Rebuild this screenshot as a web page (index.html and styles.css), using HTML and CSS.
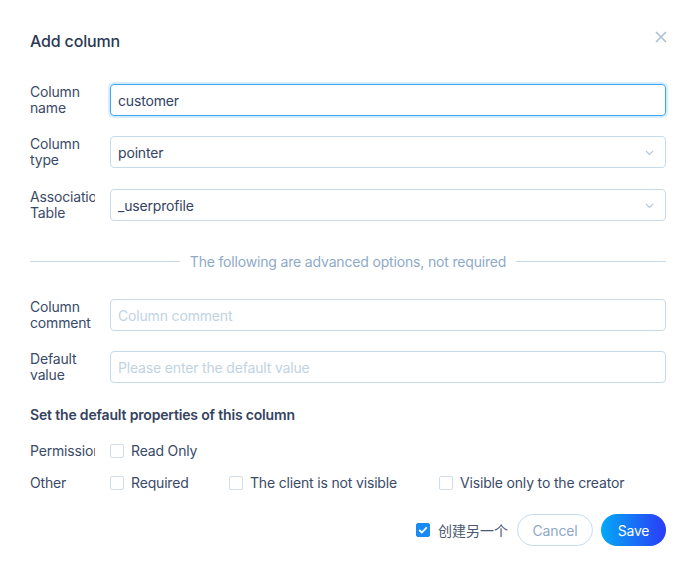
FILE: index.html
```html
<!DOCTYPE html>
<html>
<head>
<meta charset="utf-8">
<link rel="stylesheet" href="styles.css">
</head>
<body>
<div class="dialog">
  <div class="header">
    <h1 class="title">Add column</h1>
    <button class="close" aria-label="Close">
      <svg width="12" height="12" viewBox="0 0 12 12"><path d="M1 1L11 11M11 1L1 11" stroke="#a9c0d6" stroke-width="1.6" fill="none"/></svg>
    </button>
  </div>

  <div class="row">
    <label class="label"><span>Column name</span></label>
    <div class="input focused">customer</div>
  </div>
  <div class="row">
    <label class="label"><span>Column type</span></label>
    <div class="input select">pointer
      <svg class="chev" width="9" height="6" viewBox="0 0 9 6"><path d="M1 1L4.5 4.5L8 1" stroke="#b3c7da" stroke-width="1.1" fill="none"/></svg>
    </div>
  </div>
  <div class="row row-3">
    <label class="label"><span>Association Table</span></label>
    <div class="input select">_userprofile
      <svg class="chev" width="9" height="6" viewBox="0 0 9 6"><path d="M1 1L4.5 4.5L8 1" stroke="#b3c7da" stroke-width="1.1" fill="none"/></svg>
    </div>
  </div>

  <div class="divider"><span>The following are advanced options, not required</span></div>

  <div class="row">
    <label class="label"><span>Column comment</span></label>
    <div class="input placeholder">Column comment</div>
  </div>
  <div class="row last">
    <label class="label"><span>Default value</span></label>
    <div class="input placeholder">Please enter the default value</div>
  </div>

  <h2 class="subhead">Set the default properties of this column</h2>

  <div class="crow">
    <label class="label"><span>Permissions</span></label>
    <div class="checks">
      <span class="check"><i class="box"></i>Read Only</span>
    </div>
  </div>
  <div class="crow">
    <label class="label"><span>Other</span></label>
    <div class="checks">
      <span class="check w1"><i class="box"></i>Required</span>
      <span class="check w2"><i class="box"></i>The client is not visible</span>
      <span class="check"><i class="box"></i>Visible only to the creator</span>
    </div>
  </div>

  <div class="footer">
    <span class="check again"><i class="box on"><svg width="10" height="8" viewBox="0 0 10 8"><path d="M1.2 4L3.8 6.5L8.8 1.3" stroke="#fff" stroke-width="1.8" fill="none"/></svg></i>创建另一个</span>
    <button class="btn cancel">Cancel</button>
    <button class="btn save">Save</button>
  </div>
</div>
</body>
</html>
```

FILE: styles.css
```css
* { box-sizing: border-box; }
html, body { margin: 0; padding: 0; background: #fff; }
body {
  font-family: Inter, "Noto Sans CJK SC", sans-serif;
  font-size: 14px;
  letter-spacing: -0.17px;
  color: #34435f;
}
.dialog {
  width: 697px;
  height: 575px;
  padding: 29px 31px 0 30px;
}
.header {
  display: flex;
  justify-content: space-between;
  align-items: center;
  height: 24px;
  margin-bottom: 31px;
}
.title {
  margin: 0;
  font-size: 16px;
  font-weight: 500;
  line-height: 24px;
  color: #2b3955;
}
.close {
  border: 0;
  background: none;
  padding: 0;
  margin: -8px -1px 0 0;
  width: 12px;
  height: 12px;
  display: flex;
}
.row {
  display: flex;
  align-items: center;
  height: 32px;
  margin-bottom: 20px;
}
.row-3 { margin-top: 21px; margin-bottom: 0; }
.row.last { margin-bottom: 0; }
.label {
  width: 80px;
  flex: none;
  font-size: 14px;
  line-height: 16px;
  color: #3a4a68;
}
.label span {
  display: block;
  width: 65px;
  overflow: hidden;
}
.input {
  flex: 1;
  height: 32px;
  border: 1px solid #c8dae9;
  border-radius: 4px;
  padding: 0 7px;
  display: flex;
  align-items: center;
  font-size: 14px;
  color: #34435f;
  position: relative;
}
.input.focused {
  border-color: #3ea7f2;
  box-shadow: 0 0 0 2px rgba(62, 167, 242, 0.22);
}
.input.placeholder { color: #c1d3e3; }
.chev {
  position: absolute;
  right: 11px;
  top: 13px;
}
.divider {
  display: flex;
  align-items: center;
  height: 20px;
  margin: 30px 0 28px;
  color: #8eaac7;
  font-size: 14px;
}
.divider::before, .divider::after {
  content: "";
  flex: 1;
  height: 1px;
  background: #c9dbe9;
}
.divider span { padding: 0 10px; }
.subhead {
  margin: 22px 0 16px;
  font-size: 14px;
  font-weight: 600;
  line-height: 20px;
  color: #34435f;
}
.crow {
  display: flex;
  align-items: center;
  height: 20px;
  margin-bottom: 12px;
}
.crow .label span { white-space: nowrap; }
.checks { display: flex; align-items: center; }
.check {
  display: inline-flex;
  align-items: center;
  font-size: 14px;
  color: #3a4a68;
  line-height: 20px;
}
.check.w1 { width: 119px; }
.check.w2 { width: 210px; }
.box {
  width: 14px;
  height: 14px;
  border: 1px solid #d3dde7;
  border-radius: 2px;
  margin-right: 7px;
  display: inline-flex;
  align-items: center;
  justify-content: center;
  background: #fff;
}
.box.on {
  background: #1a8af5;
  border-color: #1a8af5;
}
.footer {
  display: flex;
  justify-content: flex-end;
  align-items: center;
  margin-top: 21px;
}
.again { margin-right: 9px; font-family: "Noto Sans CJK SC", sans-serif; color: #4a5873; letter-spacing: 0; }
.again .box { margin-right: 8px; }
.btn {
  height: 32px;
  border-radius: 16px;
  font-family: Inter, sans-serif;
  font-size: 14px;
  letter-spacing: -0.17px;
  padding: 0;
}
.cancel {
  width: 76px;
  background: #fff;
  border: 1px solid #c8dceb;
  color: #8fa9c5;
  margin-right: 8px;
}
.save {
  width: 65px;
  border: 0;
  color: #fff;
  background: linear-gradient(90deg, #04a9f7 0%, #2a3bf7 100%);
}
```
